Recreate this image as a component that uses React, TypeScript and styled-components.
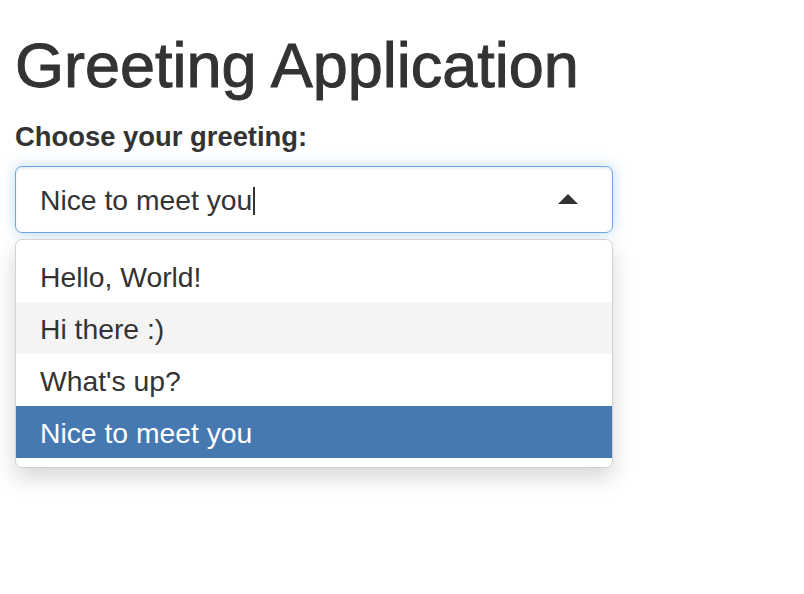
import React, { useState } from 'react';
import styled, { createGlobalStyle } from 'styled-components';

const GlobalStyle = createGlobalStyle`
  body {
    margin: 0;
    background: #fff;
    font-family: "Liberation Sans", Arial, Helvetica, sans-serif;
    color: #333;
  }
`;

const Page = styled.div`
  min-height: 100vh;
  padding: 31px 15px 0;
  box-sizing: border-box;
`;

const Title = styled.h1`
  margin: 0;
  font-size: 63px;
  font-weight: 400;
  line-height: 1.1;
  color: #333;
  -webkit-text-stroke: 1px #333;
`;

const Field = styled.div`
  width: 598px;
  margin-top: 21px;
`;

const Label = styled.label`
  display: block;
  font-size: 27.4px;
  font-weight: 700;
  line-height: 1.15;
  color: #333;
`;

const Control = styled.div`
  box-sizing: border-box;
  margin-top: 13px;
  height: 67px;
  display: flex;
  align-items: center;
  padding: 3px 34px 0 24px;
  border: 1.5px solid #6ca6e6;
  border-radius: 7px;
  background: #fff;
  box-shadow: inset 0 2px 2px rgba(0, 0, 0, 0.075), 0 0 14px rgba(102, 175, 233, 0.45);
  font-size: 28.3px;
  color: #333;
`;

const Caret = styled.span`
  display: inline-block;
  width: 1.5px;
  height: 28px;
  margin-left: 1px;
  background: #333;
`;

const Arrow = styled.span`
  margin-left: auto;
  width: 0;
  height: 0;
  border-left: 10px solid transparent;
  border-right: 10px solid transparent;
  border-bottom: 10px solid #333;
  margin-bottom: 3px;
`;

const Dropdown = styled.div`
  margin-top: 6px;
  padding: 10px 0 9px;
  border: 1px solid #d2d2d2;
  border-radius: 7px;
  background: #fff;
  box-shadow: 0 10px 22px rgba(0, 0, 0, 0.16);
`;

const Option = styled.div<{ $active?: boolean; $selected?: boolean }>`
  height: 52px;
  display: flex;
  align-items: center;
  padding: 3px 23px 0 24px;
  box-sizing: border-box;
  font-size: 28.3px;
  background: ${p => (p.$selected ? '#4679b2' : p.$active ? '#f4f4f4' : '#fff')};
  color: ${p => (p.$selected ? '#fff' : '#333')};
`;

const greetings = ['Hello, World!', 'Hi there :)', "What's up?", 'Nice to meet you'];

export default function App() {
  const [value, setValue] = useState('Nice to meet you');
  const [hovered, setHovered] = useState<string | null>('Hi there :)');

  return (
    <Page>
      <GlobalStyle />
      <Title>Greeting Application</Title>
      <Field>
        <Label>Choose your greeting:</Label>
        <Control>
          <span>{value}</span>
          <Caret />
          <Arrow />
        </Control>
        <Dropdown>
          {greetings.map(g => (
            <Option
              key={g}
              $selected={g === value}
              $active={g === hovered}
              onMouseEnter={() => setHovered(g)}
              onClick={() => setValue(g)}
            >
              {g}
            </Option>
          ))}
        </Dropdown>
      </Field>
    </Page>
  );
}
